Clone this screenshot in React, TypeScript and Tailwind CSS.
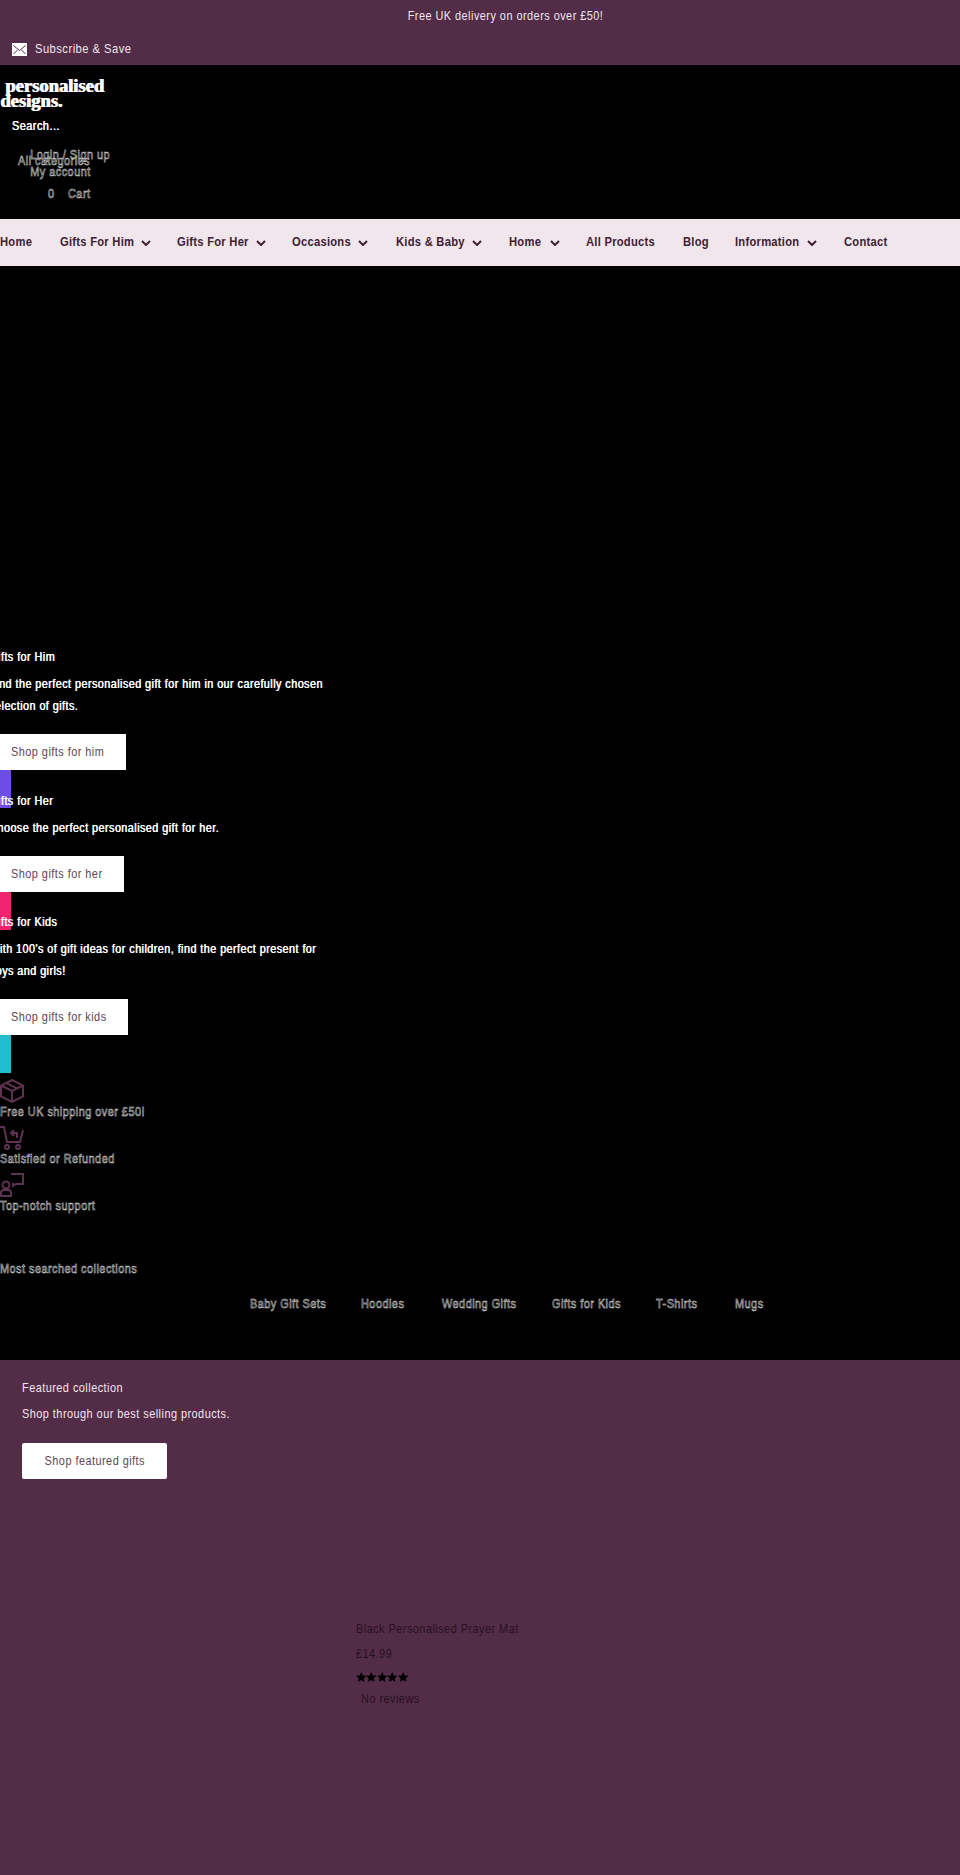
import React from "react";

const hollow = "text-black [-webkit-text-stroke:0.5px_#e4e4e4]";
const doubled = "text-white [text-shadow:0.6px_0_0_#ffffff]";
const body = "origin-left scale-x-[0.84] whitespace-nowrap text-[13px] tracking-[0.55px]";
const para = "origin-left scale-x-[0.83] whitespace-nowrap text-[13px] tracking-[0.55px]";

function Chevron() {
  return (
    <svg width="10" height="6" viewBox="0 0 10 6" fill="none" stroke="#3d2135" strokeWidth="2">
      <path d="M1 1l4 4 4-4" />
    </svg>
  );
}

function NavItem({ label, w, lw }: { label: string; w: string; lw?: string }) {
  return (
    <div className={`flex items-center ${w}`}>
      <span className={`block origin-left scale-x-[0.83] whitespace-nowrap ${lw ?? ""}`}>{label}</span>
      {lw && <Chevron />}
    </div>
  );
}

function Promo({ title, lines, cta, bar, wide }: { title: string; lines: string[]; cta: string; bar: string; wide: string }) {
  return (
    <div className="-ml-[11px]">
      <p className={`leading-[22px] ${para} ${doubled}`}>{title}</p>
      <div className="mt-[5px]">
        {lines.map((l) => (
          <p key={l} className={`leading-[22px] ${para} ${doubled}`}>{l}</p>
        ))}
      </div>
      <div className={`mt-[17px] flex h-[36px] items-center bg-white pl-[22px] text-[#5d4756] ${wide}`}>
        <span className={`block ${body}`}>{cta}</span>
      </div>
      <div className={`ml-[11px] h-[38px] w-[11px] ${bar}`} />
    </div>
  );
}

function Usp({ icon, text }: { icon: React.ReactNode; text: string }) {
  return (
    <div className="h-[47px]">
      <div className="h-[24px]">{icon}</div>
      <p className={`leading-[18px] ${body} ${hollow}`}>{text}</p>
    </div>
  );
}

function Star() {
  return (
    <svg width="10.400" height="10" viewBox="0 0 20 19" fill="#000">
      <path d="M10 0l3 6.500 7 .8-5.200 4.800 1.400 6.900L10 15.500 3.800 19l1.400-6.900L0 7.300l7-.8z" />
    </svg>
  );
}

export default function App() {
  return (
    <div className="h-[1875px] w-[960px] overflow-hidden bg-black font-['Liberation_Sans',Arial,sans-serif]">
      <div className="h-[65px] bg-[#532c47] text-[#f1e6ec]">
        <div className="pl-[51px] pt-[7px]">
          <p className="origin-center scale-x-[0.84] text-center text-[13px] leading-[18px] tracking-[0.55px]">Free UK delivery on orders over £50!</p>
        </div>
        <div className="mt-[15px] flex items-center pl-[12px]">
          <svg width="15" height="13" viewBox="0 0 15 13" className="mt-[1px]">
            <rect width="15" height="13" fill="#fff" />
            <path d="M1.500 2.500l6 5 6-5M1.500 11l4-4M13.500 11l-4-4" stroke="#532c47" strokeWidth="1" fill="none" />
          </svg>
          <span className="ml-[8px] block origin-left scale-x-[0.86] whitespace-nowrap text-[13px] leading-[18px] tracking-[0.55px]">Subscribe &amp; Save</span>
        </div>
      </div>

      <div className="h-[154px]">
        <div className="pt-[14px] font-['Liberation_Serif',serif] text-[18.500px] font-bold leading-[15px] text-white [text-shadow:1px_0_0_#ffffff]">
          <p className="pl-[5px]">personalised</p>
          <p>designs.</p>
        </div>
        <p className={`mt-[8px] pl-[14px] leading-[18px] ${body} ${doubled}`}>Search...</p>
        <div className="relative mt-[10px] h-[60px] leading-[18px]">
          <p className={`pl-[36px] pt-[1px] leading-[18px] ${body} ${hollow}`}>Login / Sign up</p>
          <p className={`absolute left-[18px] top-[7px] leading-[18px] ${body} ${hollow}`}>All categories</p>
          <p className={`-mt-[1px] pl-[36px] leading-[18px] ${body} ${hollow}`}>My account</p>
          <div className="mt-[4px] flex pl-[48px] leading-[18px]">
            <span className={`block w-[20px] ${body} ${hollow}`}>0</span>
            <span className={`block ${body} ${hollow}`}>Cart</span>
          </div>
        </div>
      </div>

      <nav className="flex h-[47px] items-center bg-[#f1e6ec] text-[13.500px] font-bold tracking-[0.3px] text-[#3d2135]">
        <NavItem label="Home" w="w-[60px]" />
        <NavItem label="Gifts For Him" w="w-[117px]" lw="w-[81px]" />
        <NavItem label="Gifts For Her" w="w-[115px]" lw="w-[79px]" />
        <NavItem label="Occasions" w="w-[104px]" lw="w-[66px]" />
        <NavItem label="Kids & Baby" w="w-[113px]" lw="w-[76px]" />
        <NavItem label="Home" w="w-[77px]" lw="w-[41px]" />
        <NavItem label="All Products" w="w-[97px]" />
        <NavItem label="Blog" w="w-[52px]" />
        <NavItem label="Information" w="w-[109px]" lw="w-[72px]" />
        <NavItem label="Contact" w="w-[46px]" />
      </nav>

      <div className="pt-[380px]">
        <Promo
          title="Gifts for Him"
          lines={["Find the perfect personalised gift for him in our carefully chosen", "selection of gifts."]}
          cta="Shop gifts for him"
          bar="bg-[#6c4de6]"
          wide="w-[137px]"
        />
        <div className="-mt-[18px]">
          <Promo
            title="Gifts for Her"
            lines={["Choose the perfect personalised gift for her."]}
            cta="Shop gifts for her"
            bar="bg-[#f0246e]"
            wide="w-[135px]"
          />
        </div>
        <div className="-mt-[19px]">
          <Promo
            title="Gifts for Kids"
            lines={["With 100's of gift ideas for children, find the perfect present for", "boys and girls!"]}
            cta="Shop gifts for kids"
            bar="bg-[#22bccf]"
            wide="w-[139px]"
          />
        </div>
      </div>

      <div className="mt-[6px]">
        <Usp
          text="Free UK shipping over £50!"
          icon={
            <svg width="24" height="24" viewBox="0 0 24 24" fill="none" stroke="#5e3251" strokeWidth="2">
              <path d="M12 1L23 6.500v11L12 23 1 17.500v-11z" />
              <path d="M1 6.500L12 12l11-5.500M12 12v11M6 3.800l11 5.500" />
            </svg>
          }
        />
        <Usp
          text="Satisfied or Refunded"
          icon={
            <svg width="24" height="24" viewBox="0 0 24 24" fill="none" stroke="#5e3251" strokeWidth="2">
              <path d="M0 1h4l3 15h13l3-12" />
              <circle cx="7" cy="21" r="2" />
              <circle cx="18" cy="21" r="2" />
              <path d="M17 12V7h-6M14 4l-3 3 3 3" />
            </svg>
          }
        />
        <Usp
          text="Top-notch support"
          icon={
            <svg width="24" height="24" viewBox="0 0 24 24" fill="none" stroke="#5e3251" strokeWidth="2">
              <path d="M11 1h12v10h-7l-3 2v-3" />
              <circle cx="6" cy="12" r="3.500" />
              <path d="M1 23v-3q0-3 3-3h4q3 0 3 3v3z" />
            </svg>
          }
        />
      </div>

      <p className={`mt-[40px] leading-[18px] ${body} ${hollow}`}>Most searched collections</p>
      <div className="mt-[17px] flex pl-[250px] leading-[18px]">
        <span className={`block w-[111px] ${body} ${hollow}`}>Baby Gift Sets</span>
        <span className={`block w-[81px] ${body} ${hollow}`}>Hoodies</span>
        <span className={`block w-[110px] ${body} ${hollow}`}>Wedding Gifts</span>
        <span className={`block w-[104px] ${body} ${hollow}`}>Gifts for Kids</span>
        <span className={`block w-[79px] ${body} ${hollow}`}>T-Shirts</span>
        <span className={`block ${body} ${hollow}`}>Mugs</span>
      </div>

      <div className="mt-[47px] h-[520px] bg-[#532c47] pl-[22px] pt-[19px] text-[#f1e6ec]">
        <p className={`leading-[18px] ${body}`}>Featured collection</p>
        <p className={`mt-[8px] leading-[18px] ${body}`}>Shop through our best selling products.</p>
        <div className="mt-[20px] flex h-[36px] w-[145px] items-center justify-center rounded-[2px] bg-white text-[#5d4756]">
          <span className="block origin-center scale-x-[0.84] whitespace-nowrap text-[13px] tracking-[0.55px]">Shop featured gifts</span>
        </div>
        <div className="ml-[334px] mt-[141px] text-[#26121f]">
          <p className={`leading-[18px] ${body}`}>Black Personalised Prayer Mat</p>
          <p className={`mt-[7px] leading-[18px] ${body}`}>£14.99</p>
          <div className="mt-[7px] flex h-[14px] items-center">
            <Star /><Star /><Star /><Star /><Star />
          </div>
          <p className={`mt-[6px] pl-[6px] leading-[18px] ${body}`}>No reviews</p>
        </div>
      </div>
    </div>
  );
}
